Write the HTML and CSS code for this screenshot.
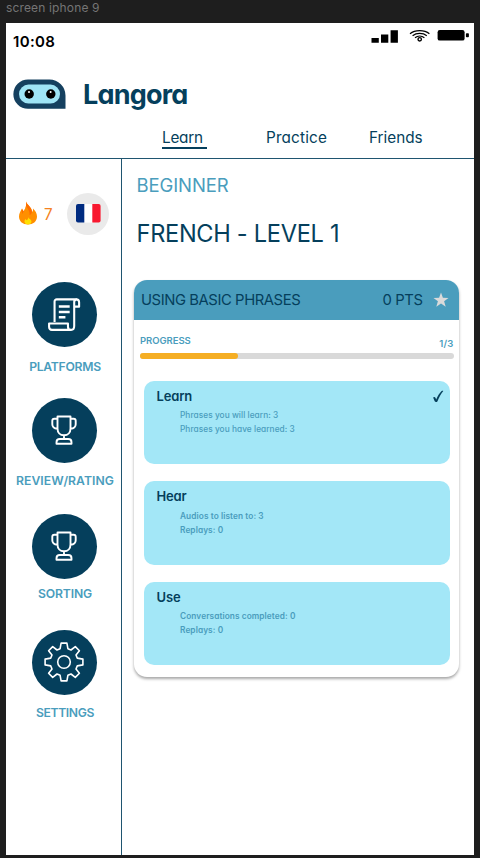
FILE: index.html
```html
<!DOCTYPE html>
<html lang="en">
<head>
<meta charset="utf-8">
<title>Langora</title>
<link rel="stylesheet" href="styles.css">
</head>
<body>
<div class="frame-name">screen iphone 9</div>
<div class="screen">
  <header class="top">
    <div class="status">
      <span class="clock">10:08</span>
      <svg class="status-icons" viewBox="0 0 100 14" width="100" height="14">
        <path d="M1.500 9h7.300v4.700H1.500zM11 5.500h7.300v8.200H11zM20.600 1.200h7.300v12.500h-7.300z"/>
        <g fill="none" stroke="#000" stroke-width="1.200">
          <path d="M40 4.700C45 .5 54.400.5 59.400 4.700M42.600 6.700C46.500 3.600 52.900 3.600 56.800 6.700M45 8.700C47.700 6.500 51.700 6.500 54.400 8.700"/>
          <circle cx="49.700" cy="10.300" r="1.700" stroke-width="1.400"/>
        </g>
        <rect x="67.600" y="1" width="27" height="10.600" rx="2.200"/>
        <rect x="95.900" y="4.300" width="3" height="4" rx=".8"/>
      </svg>
    </div>
    <div class="brand">
      <svg viewBox="0 0 53 30" width="53" height="30">
        <path fill="#15405f" d="M15 .5h21.500A16 16 0 0 1 52.500 16.500V29.800H15A14.650 14.650 0 0 1 15 .5z"/>
        <rect x="6" y="5.600" width="41" height="19" rx="9.500" fill="#9fe4f5"/>
        <circle cx="16.200" cy="15" r="4.700"/><circle cx="37.800" cy="15" r="4.700"/>
        <circle cx="16" cy="12.900" r="1" fill="#fff"/><circle cx="37.600" cy="12.900" r="1" fill="#fff"/>
      </svg>
      <span class="wordmark">Langora</span>
    </div>
    <nav class="tabs">
      <a class="tab active">Learn</a>
      <a class="tab practice">Practice</a>
      <a class="tab friends">Friends</a>
    </nav>
  </header>
  <div class="body">
    <aside class="side">
      <div class="stats">
        <svg class="flame" viewBox="0 0 18 24" width="18" height="24">
          <path fill="#ff8f00" d="M7 .5C8 4 13 6 13 11c1-.8 1.200-2.200 1-3.500 2.200 2 4 4.800 4 8C18 20.500 14 23.500 9 23.500S0 20.500 0 15.500C0 12 1.800 10 3 7.500c.4 1.200.8 2 1.600 2.800C7 7 7.500 4 7 .5z"/>
          <path fill="#ff6d00" d="M7 .5C8 4 13 6 13 11c-.5 2-1.500 3-2.500 3C11 9 8 8 7.300 5 7 8 4 10 3.600 13 2.800 11.500 2.600 9.500 3 7.500c.4 1.200.8 2 1.600 2.800C7 7 7.500 4 7 .5z"/>
          <path fill="#ffe000" d="M9.200 16c.2 1.800 3.300 2.300 3.300 4.600 0 1.800-1.600 2.900-3.500 2.900s-3.500-1.100-3.500-2.900c0-1.200.6-2 1.100-2.600.3.600.6 1 1 1.200C8.800 18.700 9.300 17.600 9.200 16z"/>
        </svg>
        <span class="streak">7</span>
        <div class="flag-chip">
          <svg viewBox="0 0 25 19" width="25" height="19">
            <rect x="8" width="9" height="18.600" fill="#fff"/>
            <path fill="#002b80" d="M2 0h6.300v18.600H2a2 2 0 0 1-2-2V2a2 2 0 0 1 2-2z"/>
            <path fill="#f8182f" d="M16.300 0h6.300a2 2 0 0 1 2 2v14.600a2 2 0 0 1-2 2h-6.300z"/>
          </svg>
        </div>
      </div>
      <div class="item platforms">
        <div class="disc"><svg viewBox="0 0 36 36" width="34" height="35" fill="none" stroke="#fff" stroke-width="2.200" stroke-linejoin="round">
          <path d="M8 26V4.300A2.300 2.300 0 0 1 10.300 2H31a3 3 0 0 1 3 3V9.700H28.800M31.500 2c-1.600 0-2.700 1-2.700 2.800V30.200c0 2.600-1.200 4.100-3.300 4.100s-3.300-1.400-3.300-3.400V27.500H2.200v3.500c0 2 1.200 3.300 3 3.300H25.600"/>
          <path d="M12.500 9.500H24M12.500 15.300H24M12.500 21h7" stroke-width="2.600"/>
        </svg></div>
        <span class="label">PLATFORMS</span>
      </div>
      <div class="item review">
        <div class="disc"><svg viewBox="0 0 28 32" width="28" height="32" fill="none" stroke="#fff" stroke-width="1.900" stroke-linejoin="round">
          <path d="M7.500 2.500h13v12c0 4-2.500 6.800-6.500 6.800s-6.500-2.800-6.500-6.800zM7.500 4.800H4.300A2 2 0 0 0 2.300 6.800v3.400c0 2.400 1.700 4.200 5.200 4.500M20.500 4.800h3.200a2 2 0 0 1 2 2v3.400c0 2.400-1.700 4.200-5.200 4.500M14 21.300v3.500M6.500 29.700v-1.500c0-2 1.300-3.200 3.300-3.200h8.400c2 0 3.300 1.200 3.300 3.200v1.500z"/>
        </svg></div>
        <span class="label">REVIEW/RATING</span>
      </div>
      <div class="item sorting">
        <div class="disc"><svg viewBox="0 0 28 32" width="28" height="32" fill="none" stroke="#fff" stroke-width="1.900" stroke-linejoin="round">
          <path d="M7.500 2.500h13v12c0 4-2.500 6.800-6.500 6.800s-6.500-2.800-6.500-6.800zM7.500 4.800H4.300A2 2 0 0 0 2.300 6.800v3.400c0 2.400 1.700 4.200 5.200 4.500M20.500 4.800h3.200a2 2 0 0 1 2 2v3.400c0 2.400-1.700 4.200-5.200 4.500M14 21.300v3.500M6.500 29.700v-1.500c0-2 1.300-3.200 3.300-3.200h8.400c2 0 3.300 1.200 3.300 3.200v1.500z"/>
        </svg></div>
        <span class="label">SORTING</span>
      </div>
      <div class="item settings">
        <div class="disc"><svg viewBox="-20 -20 40 40" width="40" height="40" fill="none" stroke="#fff" stroke-width="1.600" stroke-linejoin="round">
          <circle r="6.300"/>
          <path d="M-2.900-18.900H2.900L3.900-13.300 7-12 11.300-15.400 15.400-11.300 12-7 13.300-3.900 18.900-2.900V2.900L13.300 3.900 12 7 15.400 11.300 11.300 15.400 7 12 3.900 13.300 2.900 18.900H-2.900L-3.900 13.300-7 12-11.300 15.400-15.400 11.300-12 7-13.300 3.900-18.900 2.900V-2.900L-13.300-3.900-12-7-15.400-11.300-11.300-15.400-7-12-3.900-13.300z"/>
        </svg></div>
        <span class="label">SETTINGS</span>
      </div>
    </aside>
    <main class="main">
      <div class="eyebrow">BEGINNER</div>
      <h1>FRENCH - LEVEL 1</h1>
      <section class="card">
        <div class="card-head">
          <span class="card-title">USING BASIC PHRASES</span>
          <span class="pts">0 PTS</span>
          <svg viewBox="0 0 16 16" width="16" height="16"><path fill="#dadada" d="M8 .4 9.900 5.800 15.500 5.900 11.100 9.300 12.700 14.800 8 11.500 3.300 14.800 4.900 9.300.5 5.900 6.100 5.800z"/></svg>
        </div>
        <div class="progress-row"><span>PROGRESS</span><span class="count">1/3</span></div>
        <div class="track"><div class="fill"></div></div>
        <article class="task">
          <div class="task-top"><h2>Learn</h2>
            <svg class="check" viewBox="0 0 12 13" width="12" height="13"><path fill="#053f5c" d="M1.100 7.600C1.900 6.700 3 6.800 3.400 7.800L4.200 9.500C5.700 6.100 7.300 3.300 9.400 1.300 10.100.7 10.900.7 11.300 1 8.900 4 7 7.500 5.500 11.200 5 12.300 3.200 12.400 2.700 11.300z"/></svg></div>
          <p>Phrases you will learn: 3</p><p>Phrases you have learned: 3</p>
        </article>
        <article class="task bold">
          <div class="task-top"><h2>Hear</h2></div>
          <p>Audios to listen to: 3</p><p>Replays: 0</p>
        </article>
        <article class="task bold">
          <div class="task-top"><h2>Use</h2></div>
          <p>Conversations completed: 0</p><p>Replays: 0</p>
        </article>
      </section>
    </main>
  </div>
</div>
</body>
</html>
```
FILE: styles.css
```css
* { box-sizing: border-box; }
body {
  margin: 0;
  width: 480px;
  height: 858px;
  overflow: hidden;
  background: #1e1e1e;
  color: #053f5c;
  font-family: Inter, "Liberation Sans", sans-serif;
  font-feature-settings: "cv11";
  white-space: nowrap;
}
svg { display: block; flex: none; }
h1, h2, p { margin: 0; font-weight: 400; }

.frame-name { height: 23px; padding-left: 6px; font-size: 12px; line-height: 15px; letter-spacing: .15px; color: #757575; font-feature-settings: normal; }
.screen { width: 467.500px; height: 832px; margin-left: 6px; background: #fff; }

.top { height: 136px; border-bottom: 1.500px solid #1f5570; }
.status { display: flex; justify-content: space-between; height: 38px; padding: 6px 3.500px 0 7px; }
.clock { font-size: 15px; font-weight: 600; line-height: 26px; letter-spacing: .35px; color: #000; }
.brand { display: flex; align-items: center; height: 66px; padding-left: 7px; gap: 17px; }
.brand svg { margin-top: -1px; }
.wordmark { padding-top: 1px; font-size: 27px; font-weight: 700; line-height: 34px; letter-spacing: -.8px; }
.tabs { display: flex; padding-left: 156px; }
.tab { height: 22px; padding-top: 1px; font-size: 15.300px; line-height: 20px; }
.active { width: 45px; letter-spacing: -.25px; border-bottom: 2px solid #053f5c; }
.practice { margin-left: 59px; width: 62px; letter-spacing: .15px; }
.friends { margin-left: 41px; }

.body { display: flex; height: 696px; }
.side { width: 116px; border-right: 1.500px solid #1f5570; padding-top: 34px; }
.stats { display: flex; align-items: center; height: 42px; padding-left: 13px; margin-bottom: 46.500px; }
.flame { margin-top: -3px; }
.streak { width: 8px; margin-left: 7px; font-size: 15.300px; color: #f58220; }
.flag-chip { display: flex; align-items: center; justify-content: center; width: 42px; height: 42px; margin-left: 15px; padding-bottom: 2px; border-radius: 50%; background: #eaeaea; }
.item { display: flex; flex-direction: column; align-items: center; height: 116px; padding-left: 1px; }
.disc { display: flex; align-items: center; justify-content: center; width: 65px; height: 65px; flex: none; border-radius: 50%; background: #053f5c; }
.label { margin-top: 10.500px; padding-left: 2px; font-size: 12.200px; font-weight: 600; line-height: 16px; color: #4a9dbd; }
.platforms .label { margin-top: 12px; letter-spacing: -.3px; }
.review .label { letter-spacing: .05px; }
.sorting .label { margin-top: 7px; letter-spacing: -.15px; }
.settings .label { letter-spacing: -.4px; }

.main { flex: 1; padding: 14px 14.500px 0 12px; }
.eyebrow { height: 24px; padding-left: 2.500px; font-size: 18.500px; line-height: 24px; letter-spacing: -.1px; color: #4a9dbd; }
h1 { height: 34px; margin: 19.500px 0 29.500px; padding-left: 2.500px; font-size: 23.600px; line-height: 34px; letter-spacing: -.3px; }
.card { height: 397px; border-radius: 13px; background: #fff; box-shadow: 0 2px 3px rgba(0,0,0,.35); }
.card-head { display: flex; align-items: center; height: 40px; padding: 0 10.500px 0 7px; border-radius: 13px 13px 0 0; background: #4a9dbd; font-size: 14.800px; letter-spacing: -.42px; }
.pts { margin: 0 10px 0 auto; }
.progress-row { display: flex; justify-content: space-between; height: 32.500px; padding: 14px 5.500px 0 6px; font-size: 9.500px; font-weight: 600; line-height: 14px; letter-spacing: -.05px; color: #4a9dbd; }
.count { padding-top: 2.500px; letter-spacing: .2px; }
.track { height: 6px; margin: 0 5.500px 22px 6px; border-radius: 3px; background: #d9d9d9; }
.fill { width: 98px; height: 6px; border-radius: 3px; background: #f5ae24; }
.task { height: 83.500px; margin: 0 9.500px 17px; padding: 7px 6px 0 13px; border-radius: 10px; background: #a3e7f7; }
.task-top { display: flex; justify-content: space-between; height: 20.500px; }
.check { margin-top: 2px; }
h2 { font-size: 13px; font-weight: 600; line-height: 16px; letter-spacing: -.15px; }
p { padding-left: 23.500px; font-size: 8.300px; font-weight: 500; line-height: 14.300px; letter-spacing: .05px; color: #4a9dbd; }
.bold p { font-weight: 600; letter-spacing: .08px; }
```
